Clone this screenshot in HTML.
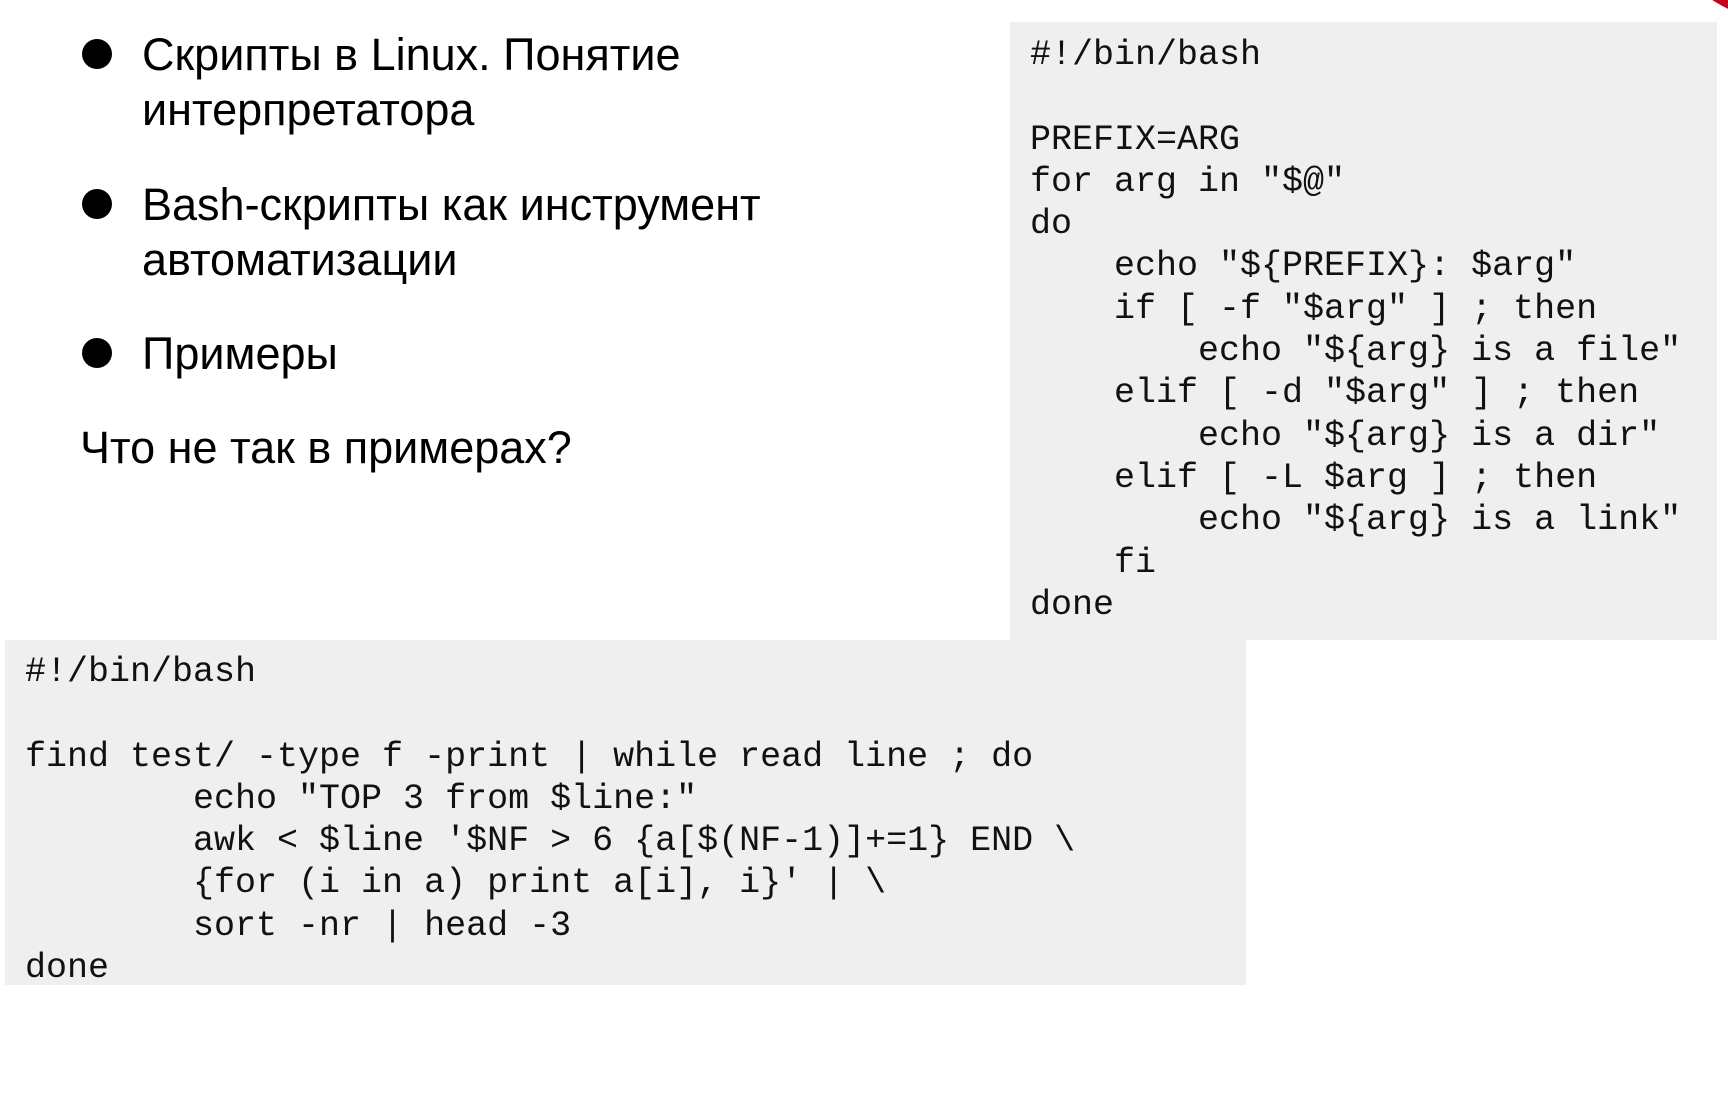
<!DOCTYPE html>
<html><head><meta charset="utf-8"><style>
html,body{margin:0;padding:0;background:#fff;width:1728px;height:1096px;overflow:hidden;position:relative}
.t{position:absolute;left:0;font-family:"Liberation Sans",sans-serif;font-size:45px;color:#000;white-space:nowrap;transform:scaleX(1.0);transform-origin:0 0;line-height:1}
.b{position:absolute;width:30px;height:30px;border-radius:50%;background:#000;left:82px}
.box{position:absolute;background:#efefef}
.c{position:absolute;font-family:"Liberation Mono","Courier New",monospace;font-size:35px;line-height:42.3px;color:#111;white-space:pre;margin:0}
</style></head><body>
<div style="position:absolute;left:1647px;top:-263px;width:286px;height:286px;border-radius:50%;background:#c8001e"></div>
<div class="b" style="top:39px"></div>
<div class="b" style="top:189px"></div>
<div class="b" style="top:338px"></div>
<div class="t" style="left:142px;top:32px">Скрипты в Linux. Понятие</div>
<div class="t" style="left:142px;top:87px">интерпретатора</div>
<div class="t" style="left:142px;top:182px">Bash-скрипты как инструмент</div>
<div class="t" style="left:142px;top:237px">автоматизации</div>
<div class="t" style="left:142px;top:331px">Примеры</div>
<div class="t" style="left:80px;top:425px">Что не так в примерах?</div>

<div class="box" style="left:1010px;top:22px;width:707px;height:618px"></div>
<pre class="c" style="left:1030px;top:34px">#!/bin/bash

PREFIX=ARG
for arg in "$@"
do
    echo "${PREFIX}: $arg"
    if [ -f "$arg" ] ; then
        echo "${arg} is a file"
    elif [ -d "$arg" ] ; then
        echo "${arg} is a dir"
    elif [ -L $arg ] ; then
        echo "${arg} is a link"
    fi
done</pre>

<div class="box" style="left:5px;top:640px;width:1241px;height:345px"></div>
<pre class="c" style="left:25px;top:651px">#!/bin/bash

find test/ -type f -print | while read line ; do
        echo "TOP 3 from $line:"
        awk &lt; $line '$NF &gt; 6 {a[$(NF-1)]+=1} END \
        {for (i in a) print a[i], i}' | \
        sort -nr | head -3
done</pre>
</body></html>
